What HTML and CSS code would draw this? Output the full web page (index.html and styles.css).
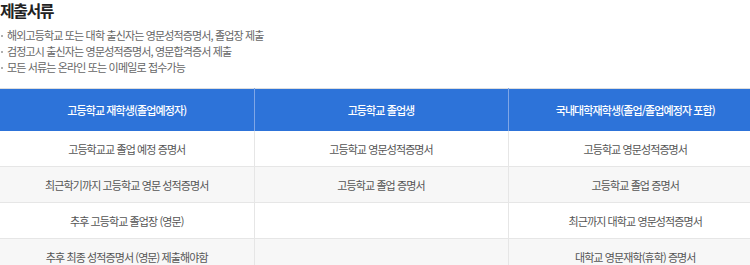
FILE: index.html
```html
<!DOCTYPE html>
<html lang="ko">
<head>
<meta charset="utf-8">
<link rel="stylesheet" href="styles.css">
</head>
<body>
<div class="page">
  <h2 class="title">제출서류</h2>
  <ul class="notes">
    <li>해외고등학교 또는 대학 출신자는 영문성적증명서, 졸업장 제출</li>
    <li>검정고시 출신자는 영문성적증명서, 영문합격증서 제출</li>
    <li>모든 서류는 온라인 또는 이메일로 접수가능</li>
  </ul>
  <table class="docs">
    <thead>
      <tr>
        <th>고등학교 재학생(졸업예정자)</th>
        <th>고등학교 졸업생</th>
        <th>국내대학재학생(졸업/졸업예정자 포함)</th>
      </tr>
    </thead>
    <tbody>
      <tr>
        <td>고등학교교 졸업 예정 증명서</td>
        <td>고등학교 영문성적증명서</td>
        <td>고등학교 영문성적증명서</td>
      </tr>
      <tr class="alt">
        <td>최근학기까지 고등학교 영문 성적증명서</td>
        <td>고등학교 졸업 증명서</td>
        <td>고등학교 졸업 증명서</td>
      </tr>
      <tr>
        <td>추후 고등학교 졸업장 (영문)</td>
        <td></td>
        <td>최근까지 대학교 영문성적증명서</td>
      </tr>
      <tr class="alt">
        <td>추후 최종 성적증명서 (영문) 제출해야함</td>
        <td></td>
        <td>대학교 영문재학(휴학) 증명서</td>
      </tr>
    </tbody>
  </table>
</div>
</body>
</html>
```

FILE: styles.css
```css
html, body {
  margin: 0;
  padding: 0;
  background: #ffffff;
}

body {
  font-family: "Noto Sans CJK KR", "Noto Sans", sans-serif;
  color: #555555;
  overflow: hidden;
}

.page {
  width: 762px;
}

.title {
  margin: 0;
  padding: 0;
  font-size: 16px;
  line-height: 20px;
  font-weight: 700;
  color: #222222;
  letter-spacing: -1.5px;
}

.notes {
  list-style: none;
  margin: 7px 0 0;
  padding: 0;
}

.notes li {
  position: relative;
  padding-left: 7px;
  font-size: 11px;
  line-height: 16px;
  letter-spacing: -0.85px;
  color: #666666;
}

.notes li::before {
  content: "";
  position: absolute;
  left: 1px;
  top: 8px;
  width: 2px;
  height: 2px;
  background: #b0b0b0;
}

.docs {
  width: 762px;
  margin-top: 13px;
  border-collapse: collapse;
  table-layout: fixed;
  border-top: 1px solid #dddddd;
}

.docs th {
  height: 42px;
  padding: 0;
  background: #2d73d9;
  color: #ffffff;
  font-size: 11px;
  font-weight: 500;
  letter-spacing: -0.9px;
  text-align: center;
  vertical-align: middle;
  border-left: 1px solid #7fa6e6;
}

.docs th:first-child {
  border-left: none;
}

.docs td {
  height: 35px;
  padding: 0;
  font-size: 11px;
  letter-spacing: -0.9px;
  color: #555555;
  text-align: center;
  vertical-align: middle;
  border-left: 1px solid #e6e6e6;
  border-bottom: 1px solid #e6e6e6;
}

.docs td:first-child {
  border-left: none;
}

.docs .alt td {
  background: #f7f7f7;
}
```
